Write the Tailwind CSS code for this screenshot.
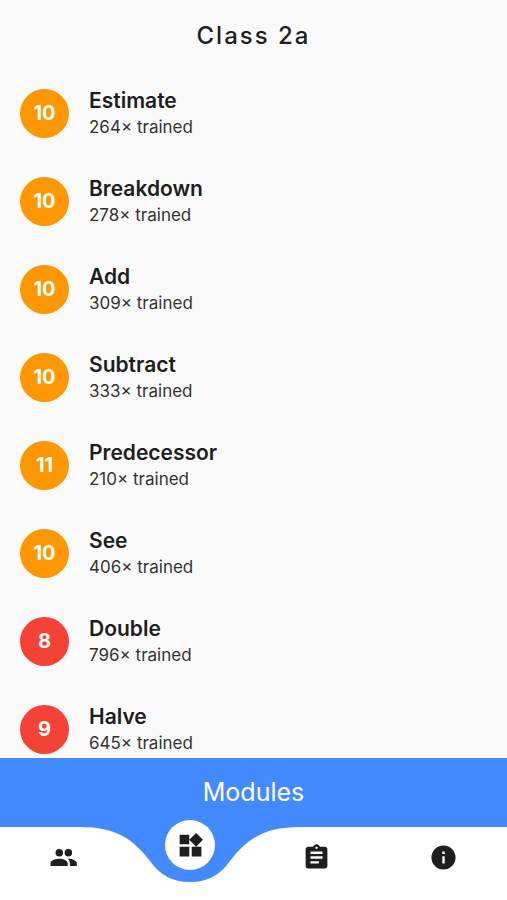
<!DOCTYPE html>
<html lang="en">
<head>
  <meta charset="UTF-8"/>
  <meta name="viewport" content="width=device-width,initial-scale=1.0"/>
  <title>Class 2a</title>
  <script src="https://cdn.jsdelivr.net/npm/@tailwindcss/browser@4"></script>
</head>
<body class="bg-[#fafafa] text-[#1e1e1e] font-['Inter',sans-serif]">

  <div class="flex flex-col h-screen">

    <!-- HEADER -->
    <header class="flex items-center justify-center h-[69px] pt-0.5 shrink-0">
      <h1 class="text-2xl font-medium tracking-[2px]">Class 2a</h1>
    </header>

    <!-- MODULE LIST -->
    <main class="flex-1 min-h-0 overflow-hidden">
      <ul id="modules"></ul>
    </main>

    <!-- BOTTOM -->
    <footer class="shrink-0">
      <h2 class="flex items-center justify-center h-[69px] bg-[#448aff] text-white text-[25px]">Modules</h2>

      <nav class="grid grid-cols-4 h-[73px] bg-white">
        <button aria-label="Students" class="flex items-center justify-center pb-3">
          <svg class="size-[29px]" viewBox="0 0 24 24" fill="currentColor"><circle cx="8.500" cy="8" r="3.100"/><circle cx="16" cy="8" r="3.100"/><path d="M8.500 13C6 13 1.300 14.170 1.300 16.500V19H15.500v-2.500C15.500 14.170 10.900 13 8.500 13zM16 13c-.29 0-.4.020-.7.050 1.160.840 1.970 1.970 1.970 3.450V19H23v-2.500c0-2.330-4.670-3.500-7-3.500z"/></svg>
        </button>

        <!-- active tab sits in the dip -->
        <button aria-label="Modules" class="relative flex justify-center">
          <svg class="absolute top-0 left-1/2 -translate-x-1/2 w-[220px] h-[55px] max-w-none pointer-events-none" viewBox="0 0 220 55" fill="#448aff"><path d="M0 0C36 0 53 12 70 34C80 48 92 55 110 55C128 55 140 48 150 34C167 12 184 0 220 0Z"/></svg>
          <span class="absolute -top-[7px] flex items-center justify-center size-[50px] rounded-full bg-white">
            <svg class="size-[29px]" viewBox="0 0 24 24" fill="currentColor"><path d="M13 13v8h8v-8h-8zM3 21h8v-8H3v8zM3 3v8h8V3H3zm13.660-1.310L11 7.340 16.660 13l5.660-5.660-5.660-5.650z"/></svg>
          </span>
        </button>

        <button aria-label="Tasks" class="flex items-center justify-center pb-3">
          <svg class="size-[29px]" viewBox="0 0 24 24" fill="currentColor"><path d="M19 3h-4.180C14.400 1.840 13.300 1 12 1c-1.300 0-2.400.840-2.820 2H5c-1.100 0-2 .9-2 2v14c0 1.100.9 2 2 2h14c1.100 0 2-.9 2-2V5c0-1.100-.9-2-2-2zm-7 0c.550 0 1 .450 1 1s-.450 1-1 1-1-.450-1-1 .450-1 1-1zm2 14H7v-2h7v2zm3-4H7v-2h10v2zm0-4H7V7h10v2z"/></svg>
        </button>

        <button aria-label="Info" class="flex items-center justify-center pb-3">
          <svg class="size-[29px]" viewBox="0 0 24 24" fill="currentColor"><path d="M12 2C6.480 2 2 6.480 2 12s4.480 10 10 10 10-4.480 10-10S17.520 2 12 2zm1 15h-2v-6h2v6zm0-8h-2V7h2v2z"/></svg>
        </button>
      </nav>
    </footer>
  </div>

  <script>
    const modules = [
      { name: 'Estimate',    level: 10, trained: 264 },
      { name: 'Breakdown',   level: 10, trained: 278 },
      { name: 'Add',         level: 10, trained: 309 },
      { name: 'Subtract',    level: 10, trained: 333 },
      { name: 'Predecessor', level: 11, trained: 210 },
      { name: 'See',         level: 10, trained: 406 },
      { name: 'Double',      level: 8,  trained: 796 },
      { name: 'Halve',       level: 9,  trained: 645 },
    ];

    // below 10 is red
    const levelColor = l => l < 10 ? 'bg-[#f44336]' : 'bg-[#ff9800]';

    document.getElementById('modules').innerHTML = modules.map(m => `
      <li class="flex items-center gap-5 h-[88px] px-5">
        <span class="flex items-center justify-center size-[49px] shrink-0 rounded-full text-white text-xl font-bold ${levelColor(m.level)}">${m.level}</span>
        <div class="pt-0.5">
          <h3 class="text-[21px] leading-[26px] font-semibold">${m.name}</h3>
          <p class="text-[17px] leading-[26px] text-[#333333]">${m.trained}× trained</p>
        </div>
      </li>`).join('');
  </script>
</body>
</html>
